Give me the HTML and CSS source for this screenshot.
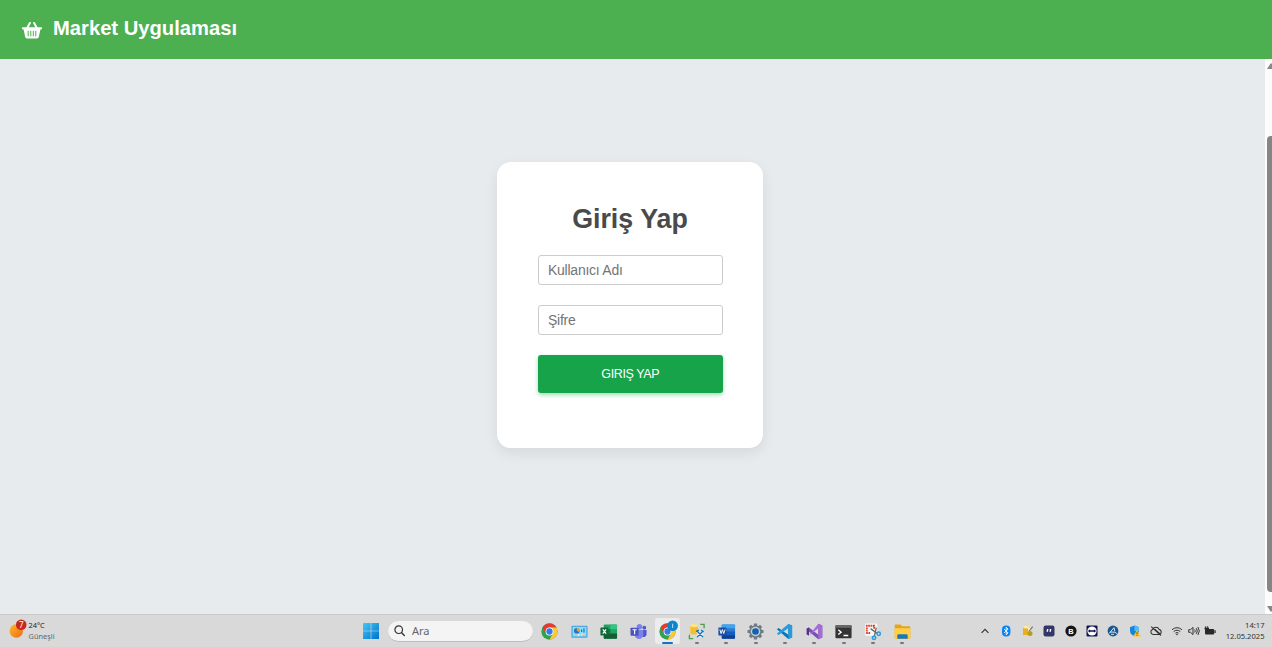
FILE: index.html
```html
<!DOCTYPE html>
<html lang="tr">
<head>
<meta charset="utf-8">
<title>Market Uygulaması</title>
<link rel="stylesheet" href="styles.css">
</head>
<body>
<header class="header">
  <svg class="basket" viewBox="0 0 20 17"><path d="M7.9 1 5.2 6M12.1 1l2.7 5" stroke="#fff" stroke-width="2" stroke-linecap="round" fill="none"/><path d="M1 5.2h18a1.1 1.1 0 0 1 0 2.2h-.6l-1.6 7.7a2 2 0 0 1-1.9 1.5H5.1a2 2 0 0 1-1.9-1.5L1.6 7.4H1a1.1 1.1 0 0 1 0-2.2z" fill="#fff"/><path d="M6.2 9.2v4.7M8.8 9.2v4.7M11.3 9.2v4.7M13.8 9.2v4.7" stroke="#4caf50" stroke-width="1" stroke-linecap="round"/></svg>
  <span class="brand">Market Uygulaması</span>
</header>
<div class="page">
  <main class="content">
    <form class="card">
      <h1 class="title">Giriş Yap</h1>
      <input class="field" type="text" placeholder="Kullanıcı Adı">
      <input class="field" type="password" placeholder="Şifre">
      <button class="submit" type="button">GIRIŞ YAP</button>
    </form>
  </main>
  <div class="scrollbar">
    <svg class="arrow" viewBox="0 0 6 6"><path d="M0 6 3.5.5H6V6z" fill="#888"/></svg>
    <div class="thumb"></div>
    <svg class="arrow" viewBox="0 0 6 6"><path d="M0 0h6v5.5H3.5z" fill="#888"/></svg>
  </div>
</div>
<footer class="taskbar">
  <div class="weather">
    <svg class="sun" viewBox="0 0 18 20"><defs><linearGradient id="sun" x1="0" y1="0" x2="1" y2="1"><stop stop-color="#ffb62c"/><stop offset="1" stop-color="#ee6b16"/></linearGradient></defs><circle cx="7.3" cy="12" r="6.7" fill="url(#sun)"/><circle cx="12.2" cy="5.7" r="5.3" fill="#c42b1c"/><text x="12.2" y="8.6" text-anchor="middle" font-size="8" fill="#fff" font-family="Noto Sans, sans-serif">7</text></svg>
    <div class="weather-text"><span>24°C</span><span class="muted">Güneşli</span></div>
  </div>
  <svg class="start" viewBox="0 0 16 16"><defs><linearGradient id="win" x1="0" y1="0" x2="1" y2="1"><stop stop-color="#42c8f7"/><stop offset="1" stop-color="#0072ce"/></linearGradient></defs><path d="M.5 0h7.2v7.7H0V.5zM8.3 0H16v7.7H8.3zM0 8.3h7.7V16H0zM8.3 8.3H16V16H8.3z" fill="url(#win)"/></svg>
  <div class="search">
    <svg class="lens" viewBox="0 0 11 11"><circle cx="4.7" cy="4.7" r="3.8" fill="none" stroke="#333" stroke-width="1.2"/><path d="m7.5 7.5 2.8 2.9" stroke="#333" stroke-width="1.4" stroke-linecap="round"/></svg>
    <span>Ara</span>
  </div>
  <nav class="apps">
    <div class="app"><svg class="icon" viewBox="0 0 20 20"><g id="chrome"><circle cx="10" cy="10" r="8.6" fill="#34a14c"/><path d="M2.6 5.7A8.6 8.6 0 0 1 17.4 5.7H10L6.4 12z" fill="#e53a2f"/><path d="M17.4 5.7A8.6 8.6 0 0 1 10 18.6L13.6 12 10 5.7z" fill="#fcc934"/><circle cx="10" cy="10" r="4.1" fill="#fff"/><circle cx="10" cy="10" r="3.3" fill="#3579e8"/></g></svg></div>
    <div class="app"><svg class="icon" viewBox="0 0 20 20"><rect x="1.5" y="4" width="17" height="12.5" rx="1" fill="#4ba7dc"/><rect x="2.8" y="5.2" width="14.4" height="10" fill="#8bdcff"/><circle cx="7.2" cy="9.2" r="3" fill="#167ac2"/><path d="M7.2 9.2V6a3.2 3.2 0 0 1 2.7 4.8z" fill="#ff9b25"/><path d="M12.2 10.5V8m2.5 3V6.5" stroke="#167ac2" stroke-width="1.3"/><path d="M5 13.8h5m2-.3h3.5" stroke="#fff" stroke-width="1.4"/><path d="M5 13.8h3m5 .1h2.5" stroke="#f58c20" stroke-width="1"/></svg></div>
    <div class="app"><svg class="icon" viewBox="0 0 20 20"><rect x="5" y="2.5" width="14" height="15" rx="1" fill="#21a366"/><path d="M12 2.5h6a1 1 0 0 1 1 1v4h-7z" fill="#33c481"/><path d="M5 12h14v4.5a1 1 0 0 1-1 1H6a1 1 0 0 1-1-1z" fill="#185c37"/><path d="M5 7.5h7V12H5z" fill="#107c41"/><rect x="1.5" y="5.8" width="8.4" height="8.4" rx=".7" fill="#0f6a38"/><path d="m4 7.7 3.5 4.6m0-4.6L4 12.3" stroke="#fff" stroke-width="1.3"/></svg></div>
    <div class="app"><svg class="icon" viewBox="0 0 20 20"><circle cx="11" cy="4.9" r="2.9" fill="#7b83eb"/><circle cx="16.1" cy="6" r="2" fill="#5059c9"/><path d="M13.5 8.5h5v5a3 3 0 0 1-5 1.5z" fill="#5059c9"/><path d="M6 8.5h9v4.8a4.5 4.5 0 0 1-9 0z" fill="#7b83eb"/><rect x="1.6" y="6" width="8.5" height="8.5" rx=".7" fill="#4b53bc"/><path d="M3.8 8.2H8M5.9 8.2v4.7" stroke="#fff" stroke-width="1.2"/></svg></div>
    <div class="app active"><svg class="icon" viewBox="0 0 20 20"><use href="#chrome"/><circle cx="15.4" cy="4" r="5.6" fill="#0b86cd"/><path d="M15.4 1.8v4.5" stroke="#d7f1ff" stroke-width=".9"/></svg><i class="mark"></i></div>
    <div class="app"><svg class="icon" viewBox="0 0 20 20"><path d="M14 2.5h4v4M6.5 17.5h-4v-4" fill="none" stroke="#45a047" stroke-width="1.4"/><path d="M3.5 4h8v9h-8z" fill="#f5bf2c"/><ellipse cx="7.5" cy="3.8" rx="4" ry="1.7" fill="#ffe680"/><path d="m10.5 9.5 6.5 6.5m0-6.5L10.500 16" stroke="#fff" stroke-width="3"/><path d="m10.500 9.500 6.500 6.500m0-6.500L10.500 16m-1-6 3-1.500m2.500 0 2.500 2" fill="none" stroke="#1976b9" stroke-width="1.600"/></svg><i class="mark"></i></div>
    <div class="app"><svg class="icon" viewBox="0 0 20 20"><rect x="5" y="2.5" width="14" height="15" rx="1" fill="#2b7cd3"/><path d="M5 6.5v-3a1 1 0 0 1 1-1h12a1 1 0 0 1 1 1v3z" fill="#41a5ee"/><path d="M5 10h14v4H5z" fill="#185abd"/><path d="M5 14h14v2.5a1 1 0 0 1-1 1H6a1 1 0 0 1-1-1z" fill="#103f91"/><rect x="1.5" y="5.8" width="8.4" height="8.4" rx=".7" fill="#174ca0"/><path d="m3 7.8 1.3 4.4L5.7 8l1.4 4.2 1.4-4.4" fill="none" stroke="#fff"/></svg><i class="mark"></i></div>
    <div class="app"><svg class="icon" viewBox="0 0 20 20"><g stroke="#707a84" stroke-width="3.4"><path d="M10 1.600v16.800M1.600 10h16.800M4.100 4.100l11.800 11.800M15.900 4.100 4.100 15.900"/></g><circle cx="10" cy="10" r="6.700" fill="#707a84"/><circle cx="10" cy="10" r="5" fill="#c8d0d7"/><circle cx="10" cy="10" r="3.500" fill="#1163ad"/></svg><i class="mark"></i></div>
    <div class="app"><svg class="icon" viewBox="0 0 20 20"><path d="m14 2 4 1.8v12.4L14 18 2 7.7l1.7-1.4L14 13.5z" fill="#0875b9"/><path d="m14 2 4 1.8v12.4L14 18V6.5L3.7 13.7 2 12.3z" fill="#269bdd"/></svg><i class="mark"></i></div>
    <div class="app"><svg class="icon" viewBox="0 0 20 20"><path d="m14 1.8 4.2 2v12.4l-4.2 2-12.2-10 2.4-2.5L14 13.5z" fill="#7652b7"/><path d="m14 1.8 4.2 2v12.4l-4.2 2V6.5L4.2 14.3l-2.4-1.2V6.9l2.4-1.2v8.6z" fill="#a66bd4"/><path d="M1.8 6.9 4.2 5.7v8.6l-2.4-1.2z" fill="#563187"/></svg><i class="mark"></i></div>
    <div class="app"><svg class="icon" viewBox="0 0 20 20"><rect x="1.5" y="3.500" width="17" height="13.500" rx="1" fill="#333"/><path d="M1.500 6V4.500a1 1 0 0 1 1-1h15a1 1 0 0 1 1 1V6z" fill="#696969"/><path d="m4.500 8.200 3 2.500-3 2.500m5.500 1h5" fill="none" stroke="#fff" stroke-width="1.400"/></svg><i class="mark"></i></div>
    <div class="app"><svg class="icon" viewBox="0 0 20 20"><rect x="2" y="1.500" width="13" height="13" rx="1.300" fill="#fafafa"/><path d="M11.800 7V4H4v7.500h4" fill="none" stroke="#d74734" stroke-width="2" stroke-dasharray="1.900 .6"/><path d="m8 7 7 5.200M14 6l-2 9" stroke="#666" stroke-width="1.400"/><circle cx="16.500" cy="12.400" r="1.800" fill="none" stroke="#269bdd" stroke-width="1.600"/><circle cx="11.600" cy="16.700" r="1.800" fill="none" stroke="#269bdd" stroke-width="1.600"/></svg><i class="mark"></i></div>
    <div class="app"><svg class="icon" viewBox="0 0 20 20"><path d="M1.800 3.500a1 1 0 0 1 1-1h5l2 2h7.400a1 1 0 0 1 1 1v11a1 1 0 0 1-1 1H2.800a1 1 0 0 1-1-1z" fill="#e7a31c"/><path d="M1.800 6.500h16.400v10a1 1 0 0 1-1 1H2.800a1 1 0 0 1-1-1z" fill="#ffd044"/><path d="M4.500 17.500v-3q0-1.500 1.500-1.500h8q1.500 0 1.500 1.500v3z" fill="#1976bd"/></svg><i class="mark"></i></div>
  </nav>
  <div class="tray">
    <svg class="tray-icon" viewBox="0 0 12 12"><path d="m2.600 7.800 3.400-3.400 3.400 3.400" fill="none" stroke="#333" stroke-width="1.100"/></svg>
    <svg class="tray-icon" viewBox="0 0 12 12"><rect x="2" y=".5" width="8.400" height="11" rx="4" fill="#0a84f5"/><path d="m4.100 4 4 4L6.200 9.800V2.200L8.100 4l-4 4" fill="none" stroke="#fff" stroke-width=".9"/></svg>
    <svg class="tray-icon" viewBox="0 0 12 12"><path d="M1 2h6v8H1z" fill="#e7af23"/><ellipse cx="4" cy="2.200" rx="3" ry="1.200" fill="#ffed9a"/><path d="M6 3h3v4H6z" fill="#fff5bd"/><path d="m10.700 1.700-4 5" stroke="#777" stroke-width="1.200"/><circle cx="8" cy="8.500" r="2.500" fill="#ba9c1c"/></svg>
    <svg class="tray-icon" viewBox="0 0 12 12"><rect x=".5" y=".5" width="11" height="11" rx="2.200" fill="#343669"/><path d="M4 4h1.400L5 6.800H3.500zM6.900 4h1.400l-.4 2.800H6.400z" fill="#fff"/></svg>
    <svg class="tray-icon" viewBox="0 0 12 12"><circle cx="6" cy="6" r="5.600" fill="#161414"/><text x="6" y="8.700" text-anchor="middle" font-family="Liberation Sans, sans-serif" font-weight="bold" font-size="7.400" fill="#fff">B</text></svg>
    <svg class="tray-icon" viewBox="0 0 12 12"><rect x=".5" y=".5" width="11" height="11" rx="1" fill="#151553"/><circle cx="6" cy="6" r="4.600" fill="#fff"/><path d="m1.800 6 2.300-1.700v1h3.800v-1L10.200 6 7.900 7.700v-1H4.100v1z" fill="#151553"/></svg>
    <svg class="tray-icon" viewBox="0 0 12 12"><circle cx="6" cy="6" r="5.400" fill="#195791"/><path d="m2 8.500 5-5.800.8 3.500M3 7l5 .2 2 1.600M4 9.300h3" fill="none" stroke="#d8eaf6" stroke-width="1"/></svg>
    <svg class="tray-icon" viewBox="0 0 12 12"><path d="M1 2.200 5.500.5 10 2.200v3.500q0 3.600-4.500 5.400Q1 9.300 1 5.700z" fill="#1684dc"/><path d="M5.500.5 10 2.200V6H5.500z" fill="#51bcf5"/><path d="m8 5 3.800 6.600H4.200z" fill="#ffc21f"/><path d="M8 7.200v2.200m0 .7v.7" stroke="#513900" stroke-width=".8"/></svg>
    <svg class="tray-icon" viewBox="0 0 12 12"><path d="M3.100 9.500a2.600 2.600 0 0 1-.3-5.100 3.400 3.400 0 0 1 6.300 0 2.600 2.600 0 0 1 .1 5.100zM1.200 1.700l9.700 8.800M4.800 4.200l5 4.400" fill="none" stroke="#333" stroke-width="1.100"/></svg>
    <svg class="tray-icon" viewBox="0 0 12 12"><path d="M1 4.800a7 7 0 0 1 10 0M2.700 6.600a4.700 4.700 0 0 1 6.600 0M4.400 8.200a2.400 2.400 0 0 1 3.200 0" fill="none" stroke="#333" stroke-width="1"/><circle cx="6" cy="9.500" r=".8" fill="#333"/></svg>
    <svg class="tray-icon" viewBox="0 0 12 12"><path d="M.7 4.700h1.800L5 2.400v7.200L2.500 7.300H.7zM6.700 4.500q1.100 1.500 0 3M8.300 3.200q2 2.800 0 5.600M9.900 2q2.800 4 0 8" fill="none" stroke="#333" stroke-width="1"/></svg>
    <svg class="tray-icon" viewBox="0 0 12 12"><rect x="1" y="4" width="9.200" height="5.500" rx="1" fill="#292929"/><path d="M10.500 5.300h1.200v2.800h-1.200zM1.200 1.200h1v1.500h1V1.200h1v1.600h.8v1.300L3.700 5.300v1H1.800v-1L.5 4.100V2.800h.7z" fill="#292929"/></svg>
  </div>
  <div class="clock"><span>14:17</span><span>12.05.2025</span></div>
</footer>
</body>
</html>
```
FILE: styles.css
```css
* { box-sizing: border-box; }
body {
  margin: 0;
  height: 647px;
  display: flex;
  flex-direction: column;
  overflow: hidden;
  font-family: "Liberation Sans", Arial, sans-serif;
}
svg { display: block; flex: none; overflow: visible; }
.header {
  height: 59px;
  flex: none;
  display: flex;
  align-items: center;
  gap: 11px;
  padding: 0 22px 2px;
  background: #4caf50;
  color: #fff;
}
.basket { width: 20px; height: 17px; margin-top: 3px; }
.brand { margin-bottom: 2px; font-size: 20.2px; font-weight: bold; line-height: 24px; }
.page { flex: 1; display: flex; min-height: 0; background: #e7ebee; }
.content { flex: 1; display: flex; justify-content: center; align-items: flex-start; padding: 102.5px 5px 0 0; }
.card {
  width: 266px;
  height: 286px;
  padding: 41px 41px 0;
  display: flex;
  flex-direction: column;
  background: #fff;
  border-radius: 14px;
  box-shadow: 0 5px 14px rgba(0, 0, 0, .08);
}
.title { margin: 0 0 19px; font-size: 26.8px; line-height: 33px; text-align: center; color: #4a4a4a; }
.field {
  width: 184.500px;
  height: 30.500px;
  margin: 0 0 19.500px;
  padding: 1px 9px 0;
  border: 1px solid #ccc;
  border-radius: 3px;
  font-family: inherit;
  font-size: 14px;
  letter-spacing: -.25px;
}
.field::placeholder { color: #757575; }
.submit {
  width: 184.500px;
  height: 38.500px;
  padding: 0;
  border: 0;
  border-radius: 3px;
  background: #16a34a;
  color: #fff;
  font-family: inherit;
  font-size: 12.500px;
  letter-spacing: -.4px;
  box-shadow: 0 2px 4px rgba(22, 163, 74, .4);
}
.scrollbar { width: 7px; padding: 4px 0 2px 2px; display: flex; flex-direction: column; background: #fcfcfc; overflow: hidden; }
.arrow { width: 6px; height: 6px; }
.thumb { width: 10px; flex: 1; margin: 67px 0 14px; border-radius: 4px; background: #858585; }
.taskbar {
  height: 33px;
  flex: none;
  display: flex;
  align-items: center;
  background: #d9d9d9;
  border-top: 1px solid #c8c9ca;
  font-family: "Noto Sans", sans-serif;
}
.weather { width: 362.500px; padding-left: 8.500px; display: flex; align-items: center; gap: 2px; }
.sun { width: 18px; height: 20px; margin-bottom: 4px; }
.weather-text { display: flex; flex-direction: column; font-size: 7.400px; line-height: 11px; color: #222; }
.muted { color: #666; }
.start { width: 16px; height: 16px; }
.search {
  width: 145px;
  height: 21px;
  margin-left: 9.500px;
  padding-left: 6px;
  display: flex;
  align-items: center;
  gap: 7px;
  border-radius: 11px;
  background: #f4f4f4;
  border-bottom: 1px solid #bcbcbc;
  font-size: 11px;
  color: #666;
}
.lens { width: 11px; height: 11px; }
.apps { display: flex; margin-left: 2.300px; }
.app { position: relative; width: 29.350px; height: 32px; display: flex; justify-content: center; align-items: center; }
.icon { width: 19px; height: 19px; position: relative; }
.active::before { content: ""; position: absolute; top: 3px; left: 2px; width: 25px; height: 26px; border-radius: 3px; background: #ececec; }
.mark { position: absolute; left: 13px; bottom: 3px; width: 4px; height: 2px; border-radius: 1px; background: #777; }
.active .mark { left: 9px; width: 11px; background: #1473c4; }
.tray { display: flex; gap: 9.400px; margin-left: 62.200px; }
.tray-icon { width: 12px; height: 12px; }
.tray-icon:nth-child(n+11) { margin-left: -5px; }
.clock { margin-left: auto; padding-right: 7.500px; display: flex; flex-direction: column; text-align: right; font-size: 7.600px; line-height: 11px; color: #333; }
```
